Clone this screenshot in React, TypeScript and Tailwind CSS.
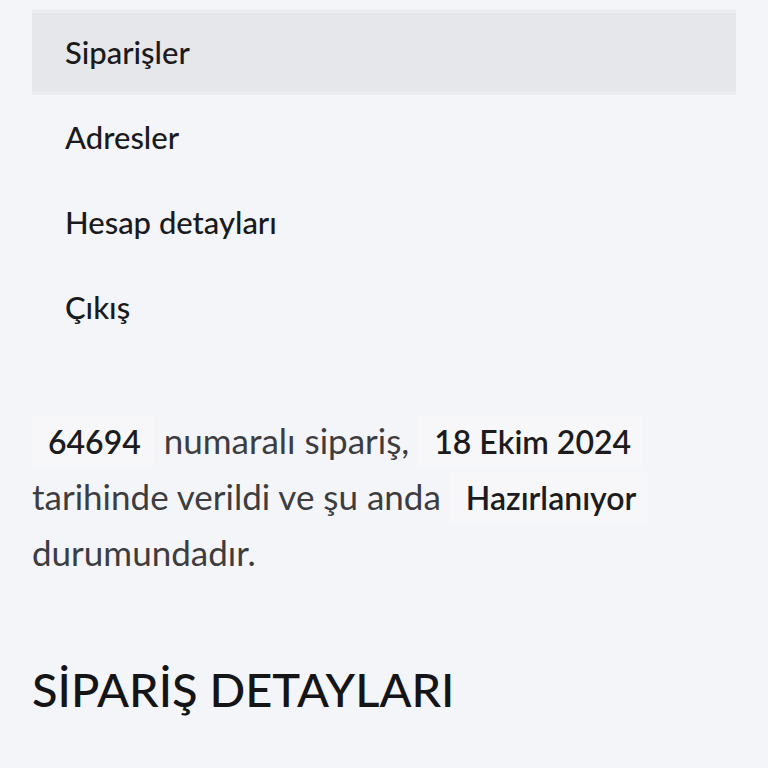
import React from 'react';

const navItems = [
  { id: 'orders', label: 'Siparişler', active: true },
  { id: 'addresses', label: 'Adresler', active: false },
  { id: 'account', label: 'Hesap detayları', active: false },
  { id: 'logout', label: 'Çıkış', active: false },
];

const Mark = ({ children }: { children: React.ReactNode }) => (
  <mark className="bg-[#f7f7f9] text-[#1c1c1e] text-[32px] font-semibold pl-4 pr-3 py-[6px] mr-[2px]">{children}</mark>
);

export default function App() {
  return (
    <div className="min-h-screen bg-[#f4f5f9] px-8 pt-[10px] font-['Lato',sans-serif] overflow-hidden">
      {/* account navigation */}
      <nav>
        <ul className="flex flex-col">
          {navItems.map((item) => (
            <li
              key={item.id}
              className={`h-[85px] flex items-center pl-[33px] text-[31px] font-medium text-[#1a1a1c] ${
                item.active ? 'bg-[#e6e7eb] border-y-[3px] border-[#ebecef]' : ''
              }`}
            >
              {item.label}
            </li>
          ))}
        </ul>
      </nav>

      {/* order notice */}
      <p className="mt-[63px] text-[35px] leading-[55px] text-[#3d3d40] font-normal">
        <Mark>64694</Mark> numaralı sipariş, <Mark>18 Ekim 2024</Mark> tarihinde verildi ve şu anda{' '}
        <Mark>Hazırlanıyor</Mark> durumundadır.
      </p>

      <h2 className="mt-[86px] text-[47px] leading-none font-medium text-[#151517]">SİPARİŞ DETAYLARI</h2>
    </div>
  );
}
